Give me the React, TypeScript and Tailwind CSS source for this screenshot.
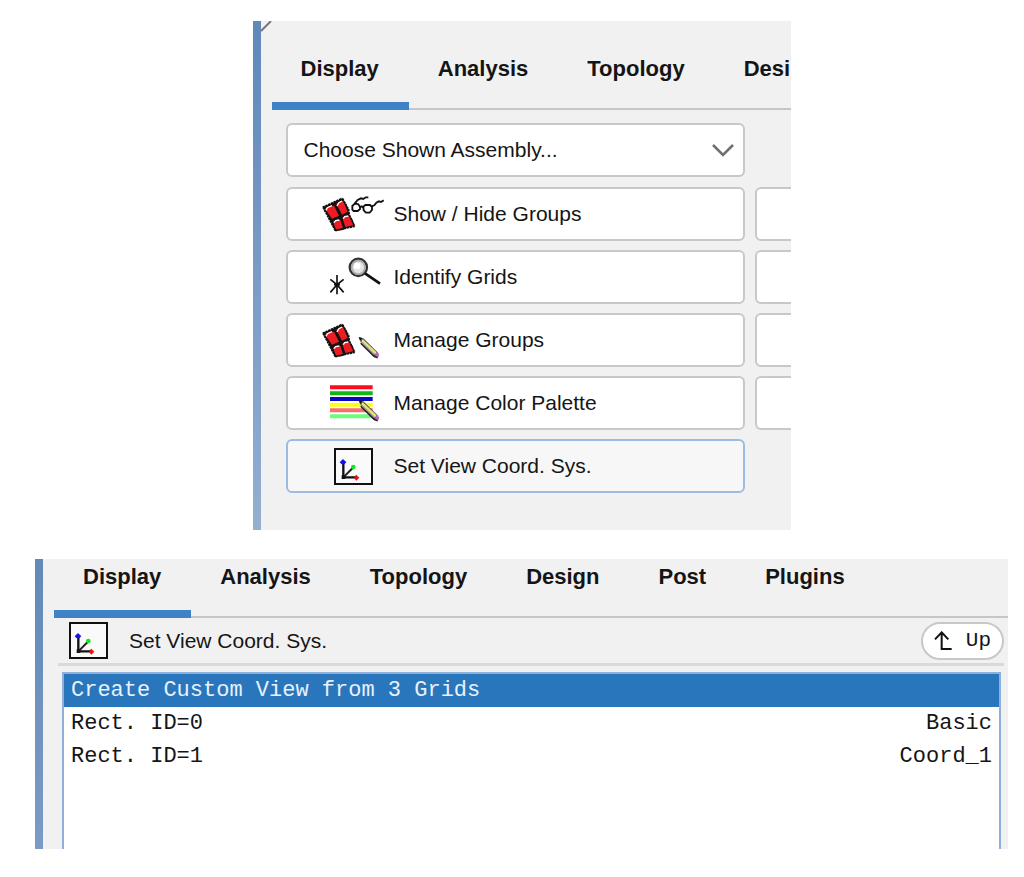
import { useState, type ReactNode } from "react";

const GroupsShape = () => (
  <g>
    <path d="M39 67L97 40L105 52L114 70L118 90L128 104L134 124L108 129L98 135L75 138L62 110L54 94Z" fill="#111" />
    <path d="M45 71L56 64L72 62L87 92L66 101Z" fill="#ed1c24" />
    <path d="M79 57L90 49L99 47L113 80L96 89Z" fill="#ed1c24" />
    <path d="M69 110L80 105L91 105L99 129L78 134Z" fill="#ed1c24" />
    <path d="M97 98L112 92L121 95L130 121L106 126Z" fill="#ed1c24" />
    <g fill="none" stroke="#fff" strokeWidth="4">
      <path d="M48 76L52 68L66 62" />
      <path d="M81 63L86 54L96 48" />
      <path d="M72 113L77 107L88 105" />
      <path d="M100 101L104 95L115 93" />
    </g>
    <path d="M38 67L97 40M39 67L76 137M76 137L134 124M98 41L116 74L118 90L134 124" fill="none" stroke="#111" strokeWidth="5" strokeDasharray="7 2" />
  </g>
);

const PencilShape = () => (
  <g>
    <path d="M147 79L160 82L202 123L206 134L203 140L194 138L153 96Z" fill="#4a4a4a" />
    <path d="M158 84L200 124L196 131L154 91Z" fill="#e9e27a" />
    <path d="M154 91L158 94L194 129L192 132L152 94Z" fill="#aaa" />
    <path d="M146 78L156 81L150 89Z" fill="#111" />
    <path d="M197 126L203 123L207 130L205 137L196 136Z" fill="#c060c8" />
    <path d="M152 97L192 136L203 141" fill="none" stroke="#222" strokeWidth="4" />
  </g>
);

const ShowHideIcon = () => (
  <svg width="62" height="40" viewBox="36 27 186 120" className="shrink-0">
    <GroupsShape />
    <g fill="none" stroke="#111" strokeWidth="5.5">
      <path d="M127 74V63L134 56L144 57L150 65V72L143 78H131Z" />
      <path d="M160 65L166 60H180L186 66V75L179 83H168L161 76Z" />
      <path d="M149 68L155 64L161 68" />
      <path d="M134 56L143 45L153 40L160 42L167 37H175" />
      <path d="M185 64L193 61L199 53L207 49L213 51L221 46" />
    </g>
  </svg>
);

const IdentifyIcon = () => (
  <svg width="62" height="40" viewBox="36 21 186 120" className="shrink-0">
    <path d="M81 75V133M61 88L81 104L101 88M61 127L81 104L101 127M72 104H90" fill="none" stroke="#111" strokeWidth="5" />
    <circle cx="145" cy="52" r="26" fill="#e4e4e4" stroke="#333" strokeWidth="7" />
    <circle cx="145" cy="52" r="20" fill="none" stroke="#aaa" strokeWidth="5" />
    <circle cx="142" cy="48" r="10" fill="#fff" />
    <path d="M165 70L210 101" stroke="#111" strokeWidth="8" />
  </svg>
);

const ManageGroupsIcon = () => (
  <svg width="62" height="40" viewBox="36 27 186 120" className="shrink-0">
    <GroupsShape />
    <PencilShape />
  </svg>
);

const PaletteIcon = () => (
  <svg width="62" height="40" viewBox="36 27 186 120" className="shrink-0">
    <path d="M60 40H188" stroke="#fb0d1b" strokeWidth="12" />
    <path d="M60 58H188" stroke="#14b414" strokeWidth="12" />
    <path d="M60 75H188" stroke="#0808c4" strokeWidth="12" />
    <path d="M60 92H188" stroke="#fdfd1c" strokeWidth="12" />
    <path d="M60 109H188" stroke="#fd6b6b" strokeWidth="12" />
    <path d="M60 127H188" stroke="#6bfd7b" strokeWidth="12" />
    <PencilShape />
  </svg>
);

const CoordIcon = () => (
  <svg width="39" height="37" viewBox="0 0 117 111" className="shrink-0">
    <rect x="3" y="3" width="111" height="105" fill="#fafafa" stroke="#111" strokeWidth="6" />
    <path d="M28 44V88H68" fill="none" stroke="#111" strokeWidth="7" />
    <path d="M28 88L56 60" stroke="#222" strokeWidth="6" />
    <path d="M27 33L37 43L31 49H23L17 43Z" fill="#1010f0" />
    <path d="M76 89L67 98L62 93V85L67 80Z" fill="#f01010" />
    <circle cx="58" cy="57" r="7" fill="#10e820" />
    <rect x="23" y="82" width="11" height="11" fill="#111" />
  </svg>
);

const Tabs = ({ items }: { items: string[] }) => {
  const [active, setActive] = useState(items[0]);

  return (
    <nav className="ml-[11px] flex border-b-2 border-[#c6c6c6]">
      {items.map((item) => (
        <button
          key={item}
          type="button"
          onClick={() => setActive(item)}
          className={`-mb-0.5 shrink-0 border-b-8 pr-[30px] pb-[21px] pl-[29px] text-[22px] leading-6 font-bold ${
            item === active ? "border-[#3f82c6]" : "border-transparent"
          }`}
        >
          {item}
        </button>
      ))}
    </nav>
  );
};

const actions: { label: string; icon: ReactNode }[] = [
  { label: "Show / Hide Groups", icon: <ShowHideIcon /> },
  { label: "Identify Grids", icon: <IdentifyIcon /> },
  { label: "Manage Groups", icon: <ManageGroupsIcon /> },
  { label: "Manage Color Palette", icon: <PaletteIcon /> },
];

const coords = [
  { id: "Rect. ID=0", name: "Basic" },
  { id: "Rect. ID=1", name: "Coord_1" },
];

const DisplayPanel = () => (
  <section className="relative mx-auto flex w-full max-w-[538px] overflow-hidden bg-[#f1f1f1]">
    <div className="w-2 shrink-0 bg-linear-to-b from-[#5f88bb] to-[#94afd1]" />
    <svg width="12" height="12" viewBox="0 0 12 12" className="absolute top-0 left-2">
      <path d="M0 10L10 0" stroke="#777" strokeWidth="2" />
    </svg>
    <div className="min-w-0 flex-1 pt-9 pb-[37px]">
      <Tabs items={["Display", "Analysis", "Topology", "Desi"]} />

      <div className="mt-[13px] ml-[25px] flex flex-col gap-[9px] text-[21px] leading-6">
        <div className="relative mb-px w-[459px]">
          <select
            aria-label="Shown assembly"
            className="h-[54px] w-full appearance-none rounded-md border-2 border-[#c8c8c8] bg-white px-4"
          >
            <option>Choose Shown Assembly...</option>
          </select>
          <svg width="24" height="14" viewBox="0 0 24 14" className="pointer-events-none absolute top-5 right-2.5">
            <path d="M2 2L12 12L22 2" fill="none" stroke="#707070" strokeWidth="2.6" />
          </svg>
        </div>

        {actions.map((action) => (
          <div key={action.label} className="flex gap-2.5">
            <button
              type="button"
              className="flex h-[54px] w-[459px] shrink-0 items-center gap-2.5 rounded-md border-2 border-[#c8c8c8] bg-white pl-[34px]"
            >
              {action.icon}
              {action.label}
            </button>
            {/* second column runs off the panel edge */}
            <button
              type="button"
              aria-label="More"
              className="h-[54px] w-[459px] shrink-0 rounded-md border-2 border-[#c8c8c8] bg-white"
            />
          </div>
        ))}

        <button
          type="button"
          className="flex h-[54px] w-[459px] items-center gap-2.5 rounded-md border-2 border-[#9bbce0] bg-[#f7f7f7] pl-[34px]"
        >
          <span className="flex w-[62px] pl-3">
            <CoordIcon />
          </span>
          Set View Coord. Sys.
        </button>
      </div>
    </div>
  </section>
);

const CoordPanel = () => (
  <section className="flex overflow-hidden bg-[#f1f1f1]">
    <div className="w-2 shrink-0 bg-linear-to-b from-[#6389b8] to-[#7b9bc5]" />
    <div className="min-w-0 flex-1 pt-1.5">
      <Tabs items={["Display", "Analysis", "Topology", "Design", "Post", "Plugins"]} />

      {/* Header */}
      <div className="mr-1 ml-[15px] flex h-12 items-center border-b-3 border-[#d9d9d9] pl-[11px]">
        <CoordIcon />
        <h2 className="ml-[21px] text-[21px] leading-6">Set View Coord. Sys.</h2>
        <button
          type="button"
          className="ml-auto flex h-[38px] items-center gap-3.5 rounded-full border-2 border-[#c8c8c8] bg-white px-[11px] font-['Liberation_Mono',monospace] text-[21px] leading-6"
        >
          <svg width="18" height="19" viewBox="218 93 54 57">
            <path d="M221 118L241 97L261 118M241 97V147H271" fill="none" stroke="#111" strokeWidth="6" />
          </svg>
          Up
        </button>
      </div>

      {/* List */}
      <div className="mt-1.5 mr-[7px] ml-[19px] min-h-[177px] border-2 border-b-0 border-[#8db0da] bg-white">
        <table className="w-full font-['Liberation_Mono',monospace] text-[22px] leading-[33px]">
          <tbody>
            <tr className="bg-[#2a76bd] text-[#e8f1fa]">
              <td colSpan={2} className="px-[7px] py-0">
                Create Custom View from 3 Grids
              </td>
            </tr>
            {coords.map((coord) => (
              <tr key={coord.id}>
                <td className="px-[7px] py-0">{coord.id}</td>
                <td className="px-[7px] py-0 text-right">{coord.name}</td>
              </tr>
            ))}
          </tbody>
        </table>
      </div>
    </div>
  </section>
);

const App = () => {
  return (
    <main className="flex flex-col gap-[29px] bg-white pt-[21px] pr-4 pb-7 pl-[35px] font-['Liberation_Sans',Arial,sans-serif] text-[#151515]">
      <DisplayPanel />
      <CoordPanel />
    </main>
  );
};

export default App;
